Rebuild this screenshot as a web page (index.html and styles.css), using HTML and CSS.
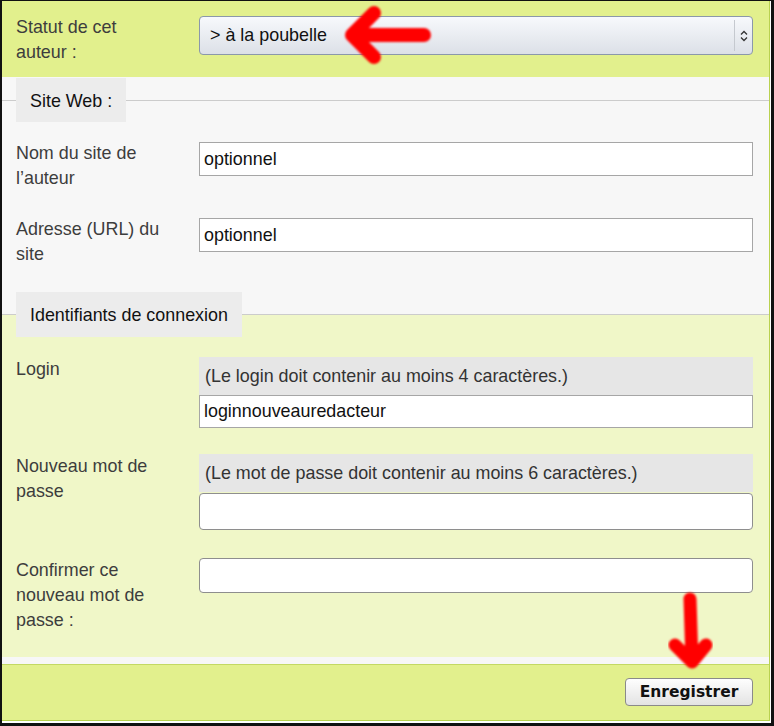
FILE: index.html
```html
<!DOCTYPE html>
<html lang="fr">
<head>
<meta charset="utf-8">
<title>Auteur</title>
<link rel="stylesheet" href="styles.css">
</head>
<body>
<div class="frame">
  <div class="form">
    <div class="status">
      <div class="label">Statut de cet<br>auteur :</div>
      <div class="select">
        <span class="select-text">&gt; à la poubelle</span>
        <span class="select-btn">
          <svg width="8" height="12" viewBox="0 0 8 12"><path d="M1 4.5 L4 1.5 L7 4.5 M1 7.5 L4 10.5 L7 7.5" fill="none" stroke="#333" stroke-width="1.3"/></svg>
        </span>
      </div>
    </div>

    <div class="fieldset fs-web">
      <div class="legend-row"><span class="legend">Site Web :</span></div>
      <div class="rows rows-web">
        <div class="row">
          <div class="label">Nom du site de<br>l’auteur</div>
          <div class="field"><input class="text text-web" type="text" value="optionnel"></div>
        </div>
        <div class="row row-gap">
          <div class="label">Adresse (URL) du<br>site</div>
          <div class="field"><input class="text text-web" type="text" value="optionnel"></div>
        </div>
      </div>
    </div>

    <div class="fieldset fs-login">
      <div class="legend-row"><span class="legend">Identifiants de connexion</span></div>
      <div class="rows rows-login">
        <div class="row">
          <div class="label">Login</div>
          <div class="field">
            <div class="explain">(Le login doit contenir au moins 4 caractères.)</div>
            <input class="text text-login" type="text" value="loginnouveauredacteur">
          </div>
        </div>
        <div class="row row-gap">
          <div class="label">Nouveau mot de<br>passe</div>
          <div class="field">
            <div class="explain">(Le mot de passe doit contenir au moins 6 caractères.)</div>
            <input class="text text-pass" type="password" value="">
          </div>
        </div>
        <div class="row row-gap2">
          <div class="label">Confirmer ce<br>nouveau mot de<br>passe :</div>
          <div class="field"><input class="text text-confirm" type="password" value=""></div>
        </div>
      </div>
    </div>

    <div class="footer">
      <button class="btn" type="button">Enregistrer</button>
    </div>
  </div>

  <svg class="arrow arrow-left" width="110" height="72" viewBox="0 0 110 72">
    <defs><filter id="soft1" x="-20%" y="-20%" width="140%" height="140%"><feGaussianBlur stdDeviation="0.9"/></filter></defs>
    <path d="M94 35 L22 35 M44 13 L22 35 L44 57" fill="none" stroke="#ff0000" stroke-width="14" stroke-linecap="round" stroke-linejoin="round" filter="url(#soft1)"/>
  </svg>

  <svg class="arrow arrow-down" width="60" height="90" viewBox="0 0 60 90">
    <defs><filter id="soft2" x="-20%" y="-20%" width="140%" height="140%"><feGaussianBlur stdDeviation="0.9"/></filter></defs>
    <path d="M30 14 L32 77 M15 60 L32 77 L46 60" fill="none" stroke="#ff0000" stroke-width="13" stroke-linecap="round" stroke-linejoin="round" filter="url(#soft2)"/>
  </svg>
</div>
</body>
</html>
```

FILE: styles.css
```css
* {
  box-sizing: border-box;
}

body {
  margin: 0;
  background: #ffffff;
  font-family: "Liberation Sans", Arial, sans-serif;
}

.frame {
  position: relative;
  width: 774px;
  height: 726px;
  border-style: solid;
  border-color: #111111;
  border-width: 1px 3px 3px 2px;
  padding: 0 1px 2px 0;
  background: #ffffff;
}

.form {
  height: 100%;
  display: flex;
  flex-direction: column;
  background: #f7f7f7;
  border-right: 1px solid #b9d14f;
  border-bottom: 1px solid #b9d14f;
}

.label {
  font-size: 17.9px;
  line-height: 25px;
  color: #3d3d3d;
}

.status {
  display: grid;
  grid-template-columns: 183px 1fr;
  padding: 14px 16px 12px 14px;
  background: #e2f08d;
}

.select {
  display: flex;
  align-items: center;
  height: 39px;
  margin-top: 1px;
  border: 1px solid #8b98aa;
  border-radius: 4px;
  background: linear-gradient(#f7f9fc, #dce0e7);
}

.select-text {
  flex: 1;
  padding-left: 10px;
  font-size: 17.9px;
  color: #111111;
}

.select-btn {
  width: 18px;
  align-self: stretch;
  margin: 3px 0;
  border-left: 1px solid #c5c9cf;
  display: flex;
  align-items: center;
  justify-content: center;
}

.legend-row {
  display: flex;
  align-items: center;
}

.legend-row::before {
  content: "";
  width: 14px;
  border-top: 1px solid #cccccc;
}

.legend-row::after {
  content: "";
  flex: 1;
  border-top: 1px solid #cccccc;
}

.legend {
  background: #ececec;
  padding: 13px 14px 11px;
  font-size: 17.9px;
  line-height: 20px;
  color: #111111;
}

.fs-login .legend {
  padding-bottom: 12px;
}

.fs-web {
  padding-bottom: 25px;
}

.fs-web .legend-row {
  margin-top: 1px;
}

.fs-login {
  padding-bottom: 24px;
  background: linear-gradient(#f7f7f7 0, #f7f7f7 22px, #f0f7c8 22px);
}

.rows {
  display: flex;
  flex-direction: column;
  padding: 0 16px 0 14px;
}

.rows-web {
  padding-top: 19px;
}

.rows-login {
  padding-top: 20px;
}

.row {
  display: grid;
  grid-template-columns: 183px 1fr;
  align-items: start;
}

.row-gap {
  margin-top: 26px;
}

.row-gap2 {
  margin-top: 28px;
}

.field {
  display: flex;
  flex-direction: column;
}

.text {
  display: block;
  width: 100%;
  margin: 0;
  padding: 0 4px;
  border: 1px solid #a6a6a6;
  background: #ffffff;
  font-family: "Liberation Sans", Arial, sans-serif;
  font-size: 17.9px;
  color: #111111;
  outline: none;
}

.text-web {
  height: 34px;
  margin-top: 1px;
}

.text-login {
  height: 33px;
}

.text-pass {
  height: 37px;
  margin-top: 1px;
  border-color: #8e8e8e;
  border-radius: 4px;
}

.text-confirm {
  height: 35px;
  border-color: #8e8e8e;
  border-radius: 4px;
}

.explain {
  background: #e6e6e6;
  padding: 7px 6px 6px;
  font-size: 17.9px;
  line-height: 25px;
  color: #333333;
}

.footer {
  flex: 1;
  margin-top: 7px;
  display: flex;
  justify-content: flex-end;
  align-items: flex-start;
  padding: 13px 16px 0 0;
  background: #e2f08d;
  border-top: 1px solid #c3d964;
}

.btn {
  width: 128px;
  height: 28px;
  margin: 0;
  padding: 0;
  border: 1px solid #8a8a8a;
  border-radius: 4px;
  background: linear-gradient(#fefefe, #e3e3e3);
  font-family: "DejaVu Sans", Verdana, sans-serif;
  font-weight: bold;
  font-size: 15.5px;
  color: #111111;
}

.arrow {
  position: absolute;
}

.arrow-left {
  left: 328px;
  top: -1px;
}

.arrow-down {
  left: 658px;
  top: 584px;
}
```
